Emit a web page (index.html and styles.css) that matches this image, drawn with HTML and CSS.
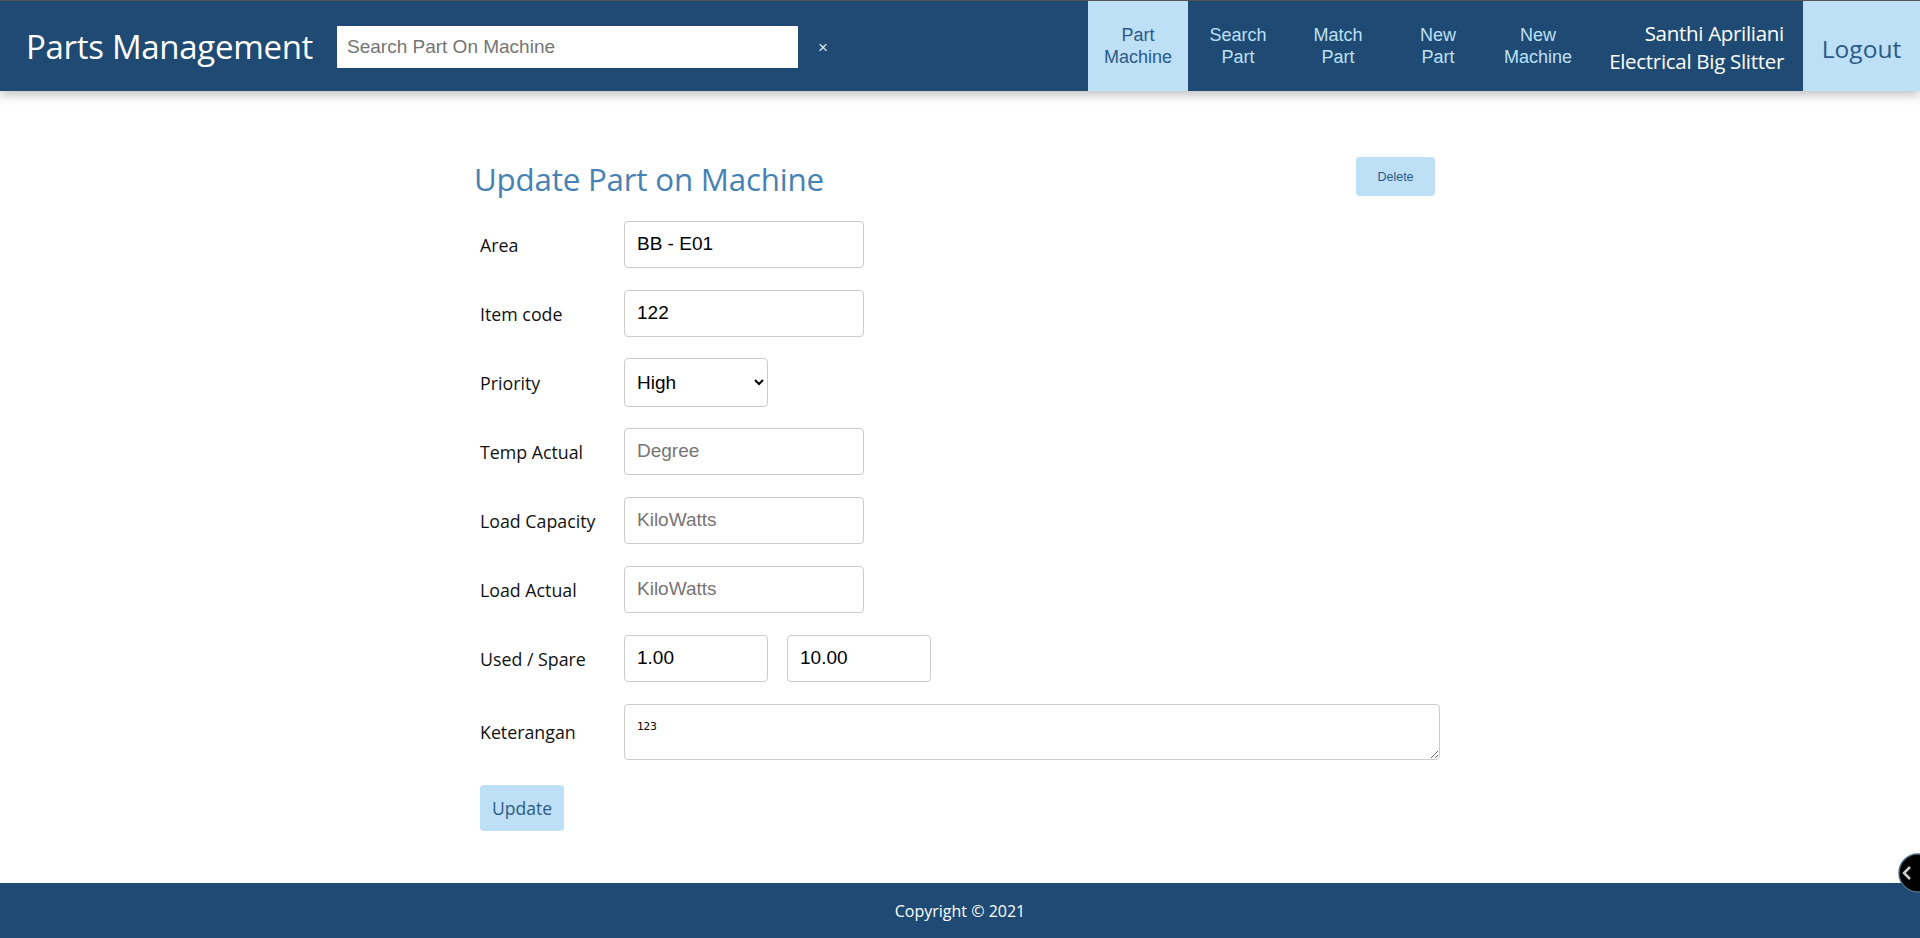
FILE: index.html
```html
<!DOCTYPE html>
<html lang="en">
<head>
<meta charset="utf-8">
<title>Parts Management</title>
<link rel="stylesheet" href="styles.css">
</head>
<body>
<header class="topbar">
  <div class="brand">Parts Management</div>
  <div class="search">
    <input class="search-input" type="text" placeholder="Search Part On Machine">
    <span class="search-clear">×</span>
  </div>
  <nav class="nav">
    <a class="nav-item active">Part<br>Machine</a>
    <a class="nav-item">Search<br>Part</a>
    <a class="nav-item">Match<br>Part</a>
    <a class="nav-item">New<br>Part</a>
    <a class="nav-item">New<br>Machine</a>
  </nav>
  <div class="user">Santhi Apriliani<br>Electrical Big Slitter</div>
  <a class="logout">Logout</a>
</header>

<main class="content">
  <div class="title-row">
    <h1 class="page-title">Update Part on Machine</h1>
    <button class="btn btn-small">Delete</button>
  </div>
  <form class="form">
    <div class="row">
      <label class="label">Area</label>
      <input class="field" type="text" value="BB - E01">
    </div>
    <div class="row">
      <label class="label">Item code</label>
      <input class="field" type="text" value="122">
    </div>
    <div class="row">
      <label class="label">Priority</label>
      <select class="field field-select"><option>High</option></select>
    </div>
    <div class="row">
      <label class="label">Temp Actual</label>
      <input class="field" type="text" placeholder="Degree">
    </div>
    <div class="row">
      <label class="label">Load Capacity</label>
      <input class="field" type="text" placeholder="KiloWatts">
    </div>
    <div class="row">
      <label class="label">Load Actual</label>
      <input class="field" type="text" placeholder="KiloWatts">
    </div>
    <div class="row">
      <label class="label">Used / Spare</label>
      <div class="pair">
        <input class="field field-small" type="text" value="1.00">
        <input class="field field-small" type="text" value="10.00">
      </div>
    </div>
    <div class="row row-area">
      <label class="label">Keterangan</label>
      <textarea class="field field-area">123</textarea>
    </div>
    <button class="btn btn-update" type="button">Update</button>
  </form>
</main>

<footer class="footer">Copyright © 2021</footer>

<div class="float-toggle">
  <svg width="40" height="40" viewBox="0 0 40 40"><circle cx="20" cy="20" r="19" fill="#000" stroke="#4a6a80" stroke-width="1.5"/><path d="M12 14 L6 20 L12 26" fill="none" stroke="#cfcfcf" stroke-width="2.5"/></svg>
</div>
</body>
</html>
```

FILE: styles.css
```css
* { box-sizing: border-box; }
html, body { margin: 0; padding: 0; }
body {
  font-family: "Open Sans", "Noto Sans", sans-serif;
  color: #111;
  background: #fff;
  height: 938px;
  display: flex;
  flex-direction: column;
  overflow: hidden;
}

.topbar {
  display: flex;
  align-items: center;
  height: 91px;
  flex-shrink: 0;
  background: #1e4a73;
  border-top: 1px solid #555;
  box-shadow: 0 4px 10px rgba(0,0,0,0.25);
  position: relative;
  z-index: 2;
}
.brand {
  color: #fff;
  font-size: 33px;
  padding-left: 26px;
  width: 337px;
  letter-spacing: -0.3px;
  white-space: nowrap;
}
.search {
  display: flex;
  align-items: center;
  margin-top: 2px;
}
.search-input {
  width: 461px;
  height: 42px;
  border: none;
  padding: 0 10px;
  font-family: "Liberation Sans", Arial, sans-serif;
  font-size: 19px;
  color: #333;
  outline: none;
}
.search-input::placeholder { color: #757575; }
.search-clear {
  color: #d6e4f0;
  font-family: "Liberation Sans", Arial, sans-serif;
  font-size: 17px;
  margin-left: 20px;
  padding-top: 2px;
}
.nav {
  display: flex;
  margin-left: auto;
  height: 100%;
}
.nav-item {
  width: 100px;
  display: flex;
  align-items: center;
  justify-content: center;
  text-align: center;
  font-family: "Liberation Sans", Arial, sans-serif;
  font-size: 18px;
  line-height: 22px;
  color: #bee0f7;
}
.nav-item.active {
  background: #bee0f7;
  color: #2b5a88;
}
.user {
  width: 215px;
  text-align: right;
  padding-right: 19px;
  padding-top: 2px;
  color: #fff;
  font-size: 20.5px;
  line-height: 28px;
  letter-spacing: -0.3px;
  white-space: nowrap;
}
.logout {
  width: 117px;
  height: 100%;
  background: #bee0f7;
  color: #2b5a88;
  font-size: 24.5px;
  padding-top: 4px;
  display: flex;
  align-items: center;
  justify-content: center;
}

.content {
  width: 972px;
  margin: 0 auto;
  padding-top: 66px;
  flex: 1;
}
.title-row {
  display: flex;
  justify-content: space-between;
  align-items: flex-start;
  padding-right: 11px;
}
.page-title {
  margin: 1.5px 0 0 0;
  font-weight: normal;
  font-size: 31.3px;
  line-height: 40px;
  color: #4682b4;
  letter-spacing: -0.2px;
}
.btn {
  border: none;
  border-radius: 4px;
  background: #bee0f7;
  color: #2b5a88;
  cursor: pointer;
}
.btn-small {
  width: 79px;
  height: 39px;
  font-family: "Liberation Sans", Arial, sans-serif;
  font-size: 12.5px;
}

.form {
  padding-left: 6px;
  margin-top: 22px;
}
.row {
  display: flex;
  align-items: center;
  height: 47px;
  margin-bottom: 22px;
}
.row-area { height: auto; }
.label {
  width: 144px;
  font-size: 17.8px;
  color: #111;
  padding-top: 1px;
  white-space: nowrap;
}
.field {
  width: 240px;
  height: 47px;
  flex-shrink: 0;
  border: 1px solid #ccc;
  border-radius: 4px;
  padding: 0 12px;
  font-family: "Liberation Sans", Arial, sans-serif;
  font-size: 19px;
  color: #000;
  background: #fff;
  outline: none;
}
.field::placeholder { color: #757575; }
.field-select {
  width: 144px;
  height: 49px;
  padding: 0 8px;
}
.pair {
  display: flex;
  gap: 19px;
}
.field-small { width: 144px; }
.field-area {
  width: 816px;
  height: 56px;
  padding: 15px 12px 6px;
  font-family: "DejaVu Sans Mono", monospace;
  font-size: 11px;
  resize: vertical;
}
.btn-update {
  width: 84px;
  height: 46px;
  font-size: 17.5px;
  font-family: "Open Sans", sans-serif;
  margin-top: 3px;
}

.footer {
  height: 55px;
  flex-shrink: 0;
  background: #1e4a73;
  color: #fff;
  font-size: 16px;
  display: flex;
  align-items: center;
  justify-content: center;
}
.float-toggle {
  position: fixed;
  left: 1898px;
  top: 853px;
  width: 40px;
  height: 40px;
  z-index: 5;
}
```
